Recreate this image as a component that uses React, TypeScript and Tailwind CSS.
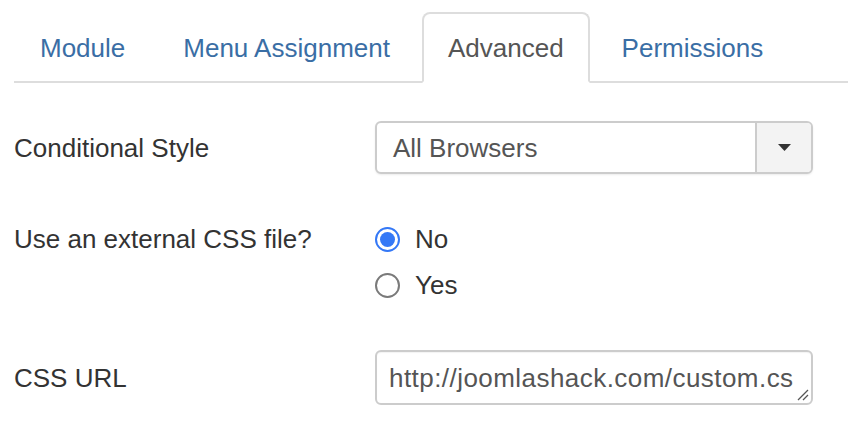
import React from 'react'

const tabs = [
  { name: 'Module', active: false },
  { name: 'Menu Assignment', active: false },
  { name: 'Advanced', active: true },
  { name: 'Permissions', active: false },
]

function Radio({ checked, label }: { checked: boolean; label: string }) {
  return (
    <label className="flex h-[46px] items-center">
      {checked ? (
        <span className="flex h-[25px] w-[25px] items-center justify-center rounded-full border-2 border-[#3478f6] bg-white">
          <span className="h-[15px] w-[15px] rounded-full bg-[#3478f6]" />
        </span>
      ) : (
        <span className="h-[25px] w-[25px] rounded-full border-2 border-[#7a7a7a] bg-white" />
      )}
      <span className="ml-[15px] text-[#333]">{label}</span>
    </label>
  )
}

export default function App() {
  return (
    <div
      className="min-h-screen w-[848px] overflow-hidden bg-white pl-[14px] text-[26px] leading-[30px] text-[#333]"
      style={{ fontFamily: '"Liberation Sans", Arial, sans-serif' }}
    >
      {/* Tabs */}
      <ul className="mt-[12px] flex border-b-2 border-[#ddd]">
        {tabs.map(({ name, active }) => (
          <li key={name} className="mr-[6px] -mb-[2px]">
            <a
              className={`flex h-[71px] items-center rounded-t-[8px] border-2 px-[24px] ${
                active
                  ? 'border-[#ddd] border-b-white bg-white text-[#555]'
                  : 'border-transparent text-[#3a6ea5]'
              }`}
            >
              {name}
            </a>
          </li>
        ))}
      </ul>

      {/* Conditional Style */}
      <div className="mt-[38px] flex h-[53px] items-center">
        <div className="w-[361px]">Conditional Style</div>
        <div className="flex h-[53px] w-[438px] overflow-hidden rounded-[6px] border-2 border-[#ccc] bg-white shadow-[0_1px_2px_rgba(0,0,0,0.08)]">
          <div className="flex flex-1 items-center pl-[16px] text-[#555]">All Browsers</div>
          <div className="flex w-[56px] items-center justify-center border-l-2 border-[#ccc] bg-[#f3f3f3]">
            <svg width="13" height="7" viewBox="0 0 13 7">
              <path d="M0 0 L13 0 L6.5 7 Z" fill="#333" />
            </svg>
          </div>
        </div>
      </div>

      {/* External CSS */}
      <div className="mt-[42px] flex">
        <div className="flex h-[46px] w-[361px] items-center">Use an external CSS file?</div>
        <div className="flex flex-col">
          <Radio checked label="No" />
          <Radio checked={false} label="Yes" />
        </div>
      </div>

      {/* CSS URL */}
      <div className="mt-[42px] flex h-[55px] items-center">
        <div className="w-[361px]">CSS URL</div>
        <div className="relative flex h-[55px] w-[438px] items-center rounded-[6px] border-2 border-[#ccc] bg-white pl-[12px] shadow-[inset_0_1px_1px_rgba(0,0,0,0.05)]">
          <span className="whitespace-nowrap tracking-[0.45px] text-[#555]">http://joomlashack.com/custom.cs</span>
          <svg className="absolute bottom-[2px] right-[2px]" width="14" height="14" viewBox="0 0 14 14">
            <path d="M13 3 L3 13 M13 8 L8 13" stroke="#555" strokeWidth="1.3" />
          </svg>
        </div>
      </div>
    </div>
  )
}
